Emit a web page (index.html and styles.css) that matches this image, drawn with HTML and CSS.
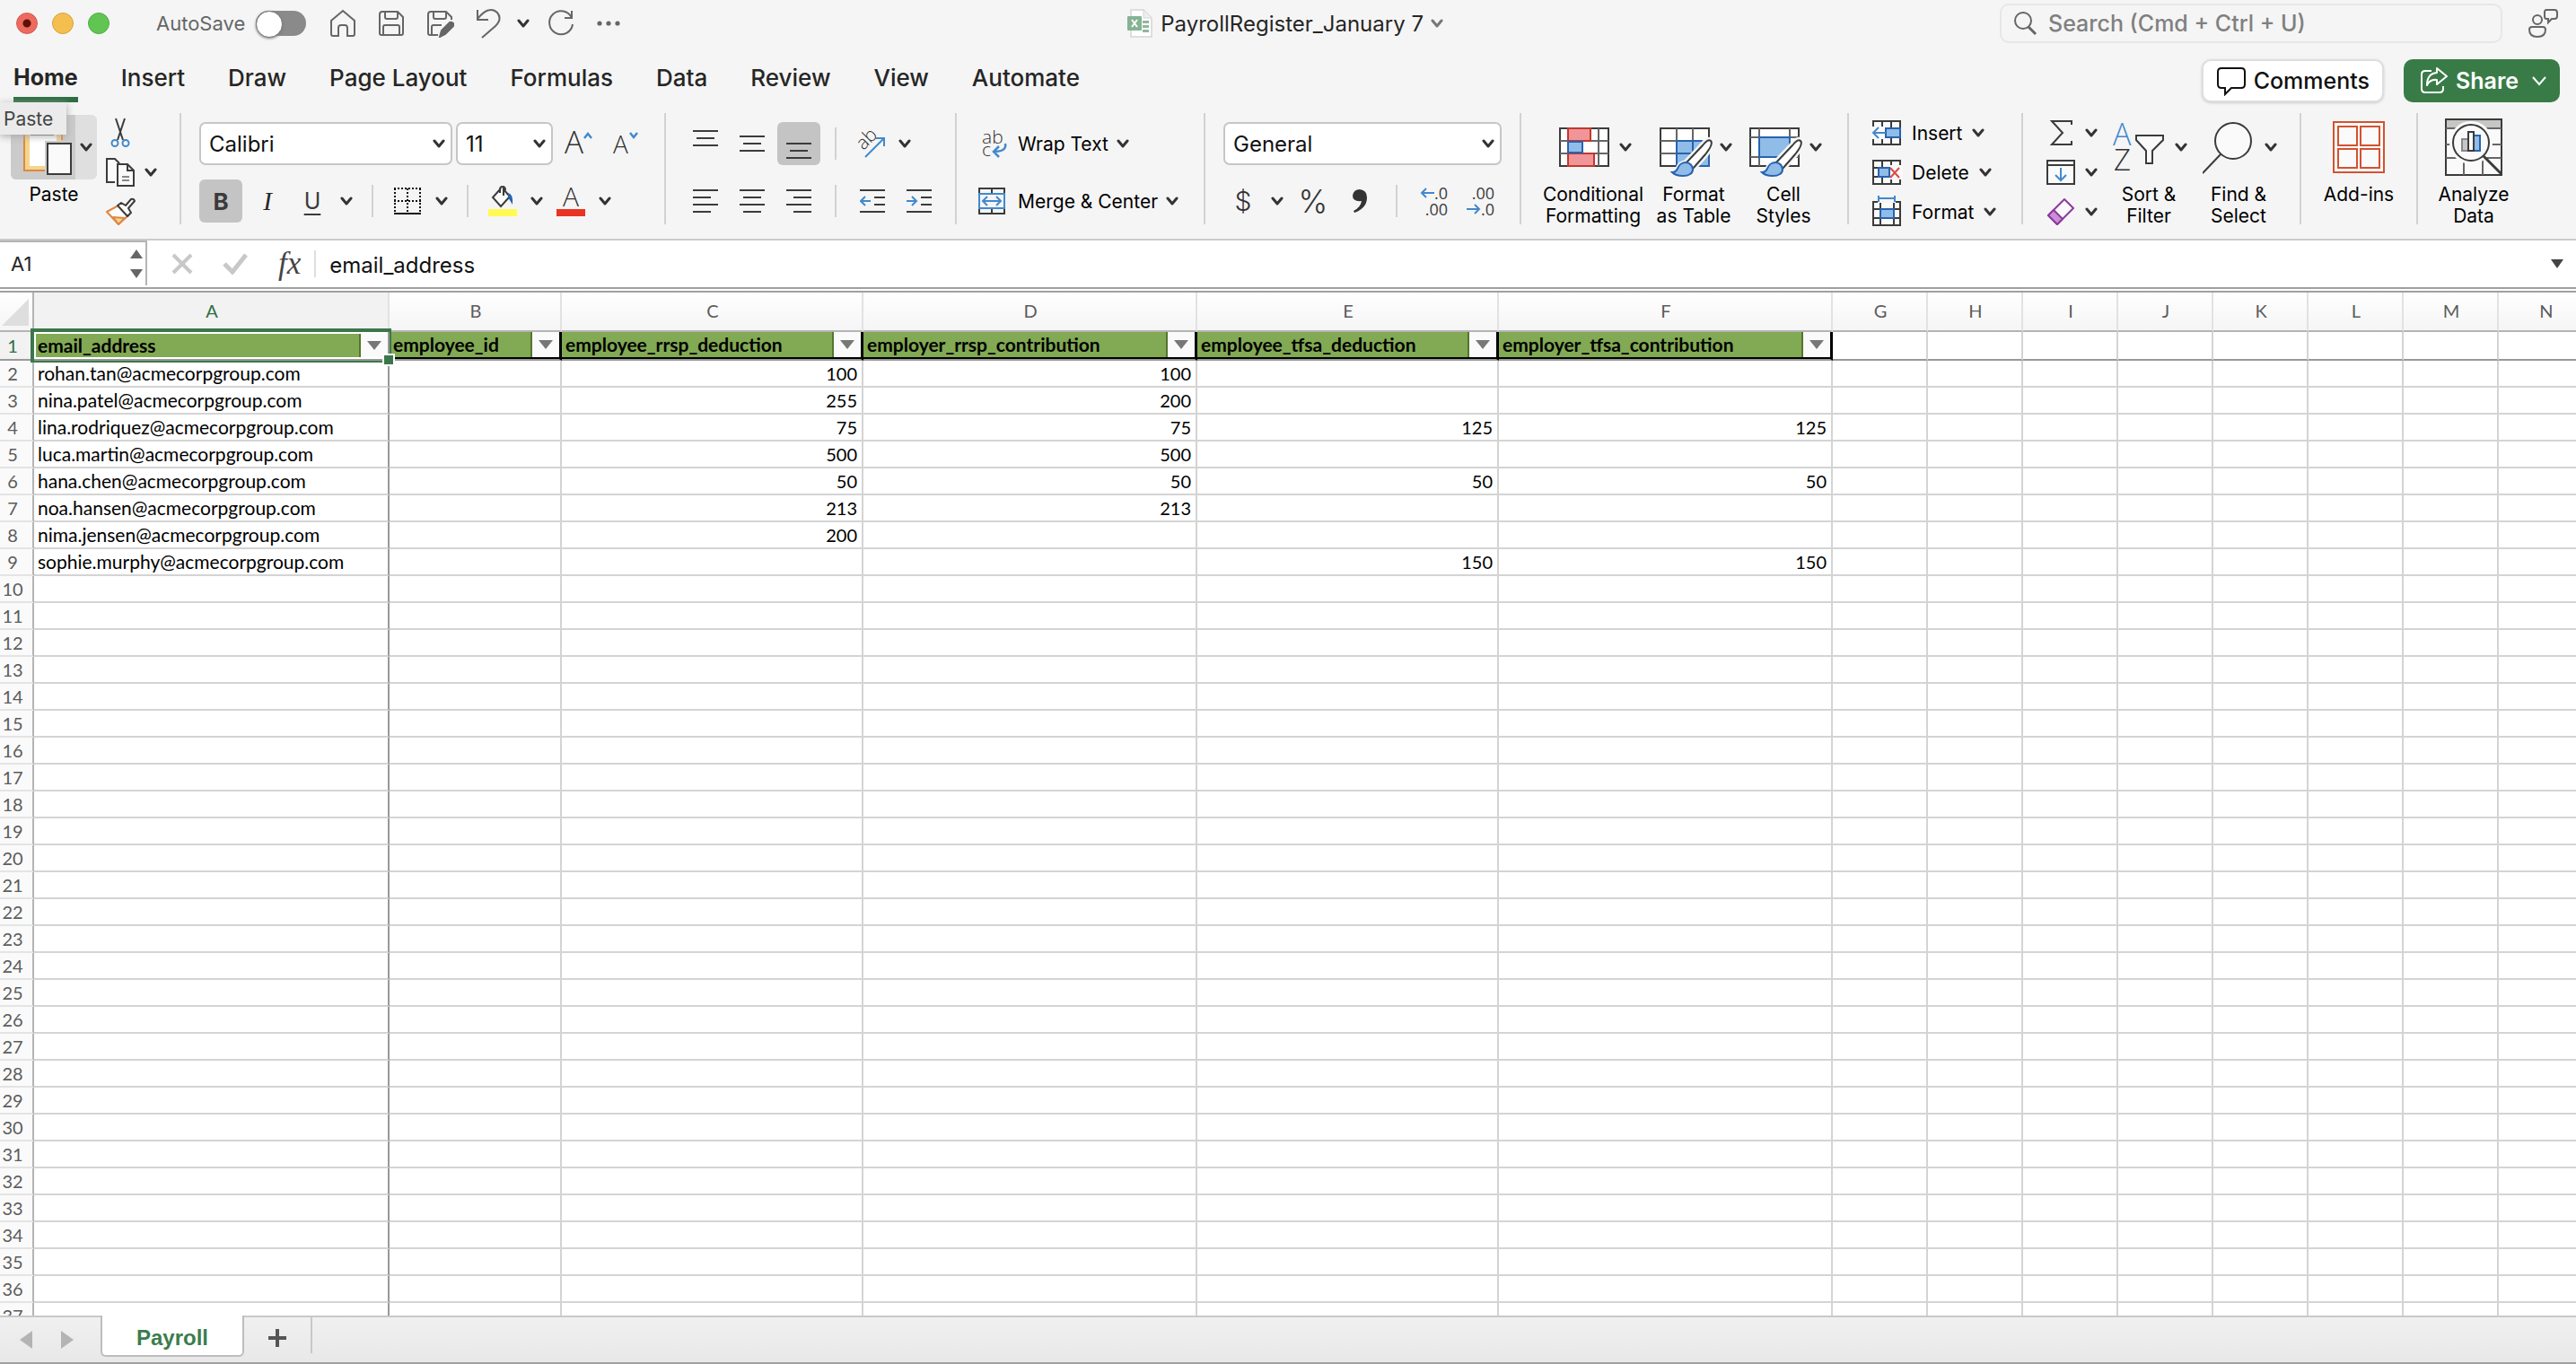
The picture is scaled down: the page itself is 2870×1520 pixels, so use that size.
FILE: index.html
```html
<!DOCTYPE html>
<html lang="en">
<head>
<meta charset="utf-8">
<title>PayrollRegister_January 7</title>
<link rel="stylesheet" href="styles.css">
</head>
<body>
<svg class="defs" aria-hidden="true">
  <symbol id="chev" viewBox="0 0 14 10"><path d="M2 2l5 6 5-6" fill="none" stroke="currentColor" stroke-width="3" stroke-linecap="round" stroke-linejoin="round"/></symbol>
  <symbol id="brush" viewBox="0 0 64 66"><path d="M59 25c3 3-2 10-6 15L39 56l-7-7L50 30c4-5 7-7 9-5z" fill="#f5f5f5" stroke="#f5f5f5" stroke-width="7"/><path d="M31 49c5 0 8 4 8 8 0 4-4 7-11 7-6 0-9-1-12-4 4 0 5-2 6-4 1-3 4-7 9-7z" fill="#f5f5f5" stroke="#f5f5f5" stroke-width="5"/><path d="M59 25c3 3-2 10-6 15L39 56l-7-7L50 30c4-5 7-7 9-5z" fill="#fff" stroke="#3b3b3b" stroke-width="2"/><path d="M31 49c5 0 8 4 8 8 0 4-4 7-11 7-6 0-9-1-12-4 4 0 5-2 6-4 1-3 4-7 9-7z" fill="#90bce8" stroke="#2763b0" stroke-width="2"/></symbol>
</svg>

<header class="titlebar">
  <div class="lights">
    <button class="light red" aria-label="Close"></button>
    <button class="light yellow" aria-label="Minimize"></button>
    <button class="light green" aria-label="Zoom"></button>
  </div>
  <label class="autosave">AutoSave<input type="checkbox" role="switch"></label>
  <div class="quick">
    <button aria-label="Home"><svg width="32" height="32" viewBox="0 0 32 32"><path d="M3 13L16 2l13 11v15q0 2-2 2h-6v-9q0-3-3-3h-4q-3 0-3 3v9H5q-2 0-2-2z"/></svg></button>
    <button aria-label="Save"><svg width="32" height="32" viewBox="0 0 32 32"><path d="M6 3h17l6 6v18q0 2-2 2H5q-2 0-2-2V6q0-3 3-3zM9 3v6q0 2 2 2h10q2 0 2-2V3M7 29V20q0-2 2-2h14q2 0 2 2v9"/></svg></button>
    <button aria-label="Save as"><svg width="32" height="32" viewBox="0 0 32 32"><path d="M14 29H5q-2 0-2-2V6q0-3 3-3h17l6 6v3M9 3v6q0 2 2 2h10q2 0 2-2V3M7 29V20q0-2 2-2h9"/><path d="M16 31l2-7 9-9q2-1 4 1 1 2 0 3l-9 9z" fill="#666"/></svg></button>
    <button aria-label="Undo"><svg width="32" height="36" viewBox="0 0 32 36"><path d="M4 3v11h12M4 13C12 3 20 0 26 6c5 6 1 12-2 15L9 34"/></svg></button>
    <button class="narrow" aria-label="Undo history"><svg class="chev"><use href="#chev"/></svg></button>
    <button aria-label="Redo"><svg width="32" height="32" viewBox="0 0 32 32"><path d="M28 10A13 13 0 1 0 29 17M28 2v8H20"/></svg></button>
    <button aria-label="More"><svg width="32" height="32" viewBox="0 0 32 32"><g fill="#666" stroke="none"><circle cx="5" cy="16" r="2.600"/><circle cx="15" cy="16" r="2.600"/><circle cx="25" cy="16" r="2.600"/></g></svg></button>
  </div>
  <button class="doc">
    <svg width="30" height="34" viewBox="0 0 30 34"><path d="M5 2h14l9 9v21H5z" fill="#fff" stroke="#d5d5d5" stroke-width="1.500"/><path d="M19 2v9h9" fill="#eee" stroke="#d5d5d5"/><path d="M18 14h7v3h-7zM18 19h7v3h-7zM18 24h7v3h-7z" fill="#8fb79b"/><rect x="1" y="9" width="16" height="16" rx="1" fill="#85b394"/><path d="M6 13l6 8M12 13l-6 8" stroke="#fff" stroke-width="2"/></svg>
    <span>PayrollRegister_January 7</span>
    <svg class="chev light-chev"><use href="#chev"/></svg>
  </button>
  <div class="title-right">
    <div class="search">
      <svg width="28" height="28" viewBox="0 0 28 28" fill="none" stroke="#666" stroke-width="2"><circle cx="12" cy="11" r="9"/><path d="M18 18l8 8" stroke-width="3"/></svg>
      <input type="search" aria-label="Search" placeholder="Search (Cmd + Ctrl + U)">
    </div>
    <button class="person" aria-label="Presence"><svg width="34" height="34" viewBox="0 0 34 34" fill="none" stroke="#666" stroke-width="2"><circle cx="11" cy="13" r="5"/><path d="M5 21h12q3 0 3 3 0 8-9 8t-9-8q0-3 3-3zM21 2h9q3 0 3 3v4q0 3-3 3h-3l-4 4v-4h-2q-2 0-2-3V5q0-3 2-3z"/></svg></button>
  </div>
</header>

<div class="tabrow">
  <nav class="tabs">
    <a class="active" href="#home">Home</a><a href="#insert">Insert</a><a href="#draw">Draw</a><a href="#layout">Page Layout</a><a href="#formulas">Formulas</a><a href="#data">Data</a><a href="#review">Review</a><a href="#view">View</a><a href="#automate">Automate</a>
  </nav>
  <div class="actions">
    <button class="comments"><svg width="34" height="34" viewBox="0 0 34 34" fill="none" stroke="#111" stroke-width="2"><path d="M6 3h22q4 0 4 4v14q0 4-4 4H17l-7 7v-7H6q-4 0-4-4V7q0-4 4-4z"/></svg>Comments</button>
    <button class="share"><svg width="32" height="32" viewBox="0 0 32 32" fill="none" stroke="#fff" stroke-width="2"><path d="M13 5H6Q2 5 2 9v16q0 4 4 4h16q4 0 4-4v-3M19 2l11 9-11 9v-5q-8-1-11 6 0-13 11-14z" stroke-linejoin="round"/></svg>Share<svg class="share-chev" width="18" height="12" viewBox="0 0 18 12" fill="none" stroke="#fff" stroke-width="2"><path d="M2 2l7 8 7-8"/></svg></button>
  </div>
</div>

<div class="ribbon">
  <section class="group clipboard" aria-label="Clipboard">
    <div class="big paste">
      <div class="paste-face">
        <button class="paste-main" aria-label="Paste clipboard"><svg width="60" height="64" viewBox="0 0 60 64"><path d="M4 8h40v46H4z" fill="#fff"/><path d="M6 6h36v50H6z" fill="none" stroke="#f5d58c" stroke-width="6"/><path d="M3 6v52h25M45 6v18" fill="none" stroke="#dd8844" stroke-width="2"/><path d="M10 18h26" stroke="#555" stroke-width="2"/><path d="M26 25h32v39H26z" fill="#ccc"/><path d="M29 28h26v34H29z" fill="#fafafa" stroke="#3b3b3b" stroke-width="2"/></svg></button>
        <button class="paste-more" aria-label="Paste options"><svg class="chev"><use href="#chev"/></svg></button>
      </div>
      <span>Paste</span>
      <div class="tooltip" role="tooltip">Paste</div>
    </div>
    <div class="stack">
      <div class="srow"><button class="ic" aria-label="Cut"><svg width="24" height="34" viewBox="0 0 24 34" fill="none"><path d="M7 1l8 24M17 1L9 25" stroke="#3b3b3b" stroke-width="2"/><circle cx="6" cy="28.500" r="3.500" stroke="#4189cc" stroke-width="2"/><circle cx="18" cy="28.500" r="3.500" stroke="#4189cc" stroke-width="2"/></svg></button></div>
      <div class="srow"><button class="ic" aria-label="Copy"><svg width="34" height="34" viewBox="0 0 34 34" fill="#fafafa" stroke="#3b3b3b" stroke-width="2"><path d="M11 28H2V2h9l5 5"/><path d="M14 8h11l7 7v17H14zM25 8v7h7"/><path d="M19 22h8M19 26h8" stroke="#888"/></svg></button><button class="dd" aria-label="Copy options"><svg class="chev"><use href="#chev"/></svg></button></div>
      <div class="srow"><button class="ic" aria-label="Format painter"><svg width="34" height="32" viewBox="0 0 34 32" fill="none" stroke-width="2" stroke-linejoin="round"><path d="M2 16l13-7 11 11-11 10z" fill="#fff" stroke="#dd8844"/><path d="M9 22l13 1-7 7z" fill="#f7d58e" stroke="#dd8844"/><path d="M14 9l4-3 5 3 6-7q3-1 4 2l-7 8 3 5-4 4z" fill="#fafafa" stroke="#3b3b3b"/></svg></button></div>
    </div>
  </section>

  <section class="group font" aria-label="Font">
    <div class="rows">
      <div class="row">
        <div class="pick w-font"><select aria-label="Font name"><option>Calibri</option></select><svg class="chev"><use href="#chev"/></svg></div>
        <div class="pick w-size"><select aria-label="Font size"><option>11</option></select><svg class="chev"><use href="#chev"/></svg></div>
        <button class="sq" aria-label="Increase font size"><svg class="glyph" width="36" height="32" viewBox="0 0 36 32"><text x="3" y="27" font-size="35">A</text><path d="M25 10l4-5 4 5" fill="none" stroke="#4189cc" stroke-width="2.500"/></svg></button>
        <button class="sq" aria-label="Decrease font size"><svg class="glyph" width="36" height="32" viewBox="0 0 36 32"><text x="5" y="27" font-size="28">A</text><path d="M24 4l4 5 4-5" fill="none" stroke="#4189cc" stroke-width="2.500"/></svg></button>
      </div>
      <div class="row">
        <button class="sq on bold" aria-label="Bold">B</button>
        <button class="sq ital" aria-label="Italic">I</button>
        <button class="ic under" aria-label="Underline">U</button><button class="dd" aria-label="Underline style"><svg class="chev"><use href="#chev"/></svg></button>
        <i class="sep"></i>
        <button class="ic" aria-label="Borders"><svg width="32" height="32" viewBox="0 0 32 32" fill="none" stroke="#111" stroke-width="2"><path d="M1 2h30M1 16h30M2 2v26M16 2v26M30 2v26" stroke-dasharray="2 2"/><path d="M1 30h30"/></svg></button><button class="dd" aria-label="Border style"><svg class="chev"><use href="#chev"/></svg></button>
        <i class="sep"></i>
        <button class="ic" aria-label="Fill color"><svg width="32" height="34" viewBox="0 0 32 34" fill="none" stroke-width="2"><path d="M14 3L5 13l9 10 10-11-7-8v7M13 8V4q0-3 3-3t3 4" stroke="#3b3b3b" fill="#fafafa"/><path d="M22 8q6 1 5 13-3-5-5-8z" fill="#2763b0"/><path d="M0 26h32v8H0z" fill="#fffb54"/></svg></button><button class="dd" aria-label="Fill palette"><svg class="chev"><use href="#chev"/></svg></button>
        <button class="ic" aria-label="Font color"><svg class="glyph" width="32" height="34" viewBox="0 0 32 34"><text x="7" y="23" font-size="30">A</text><path d="M0 26h32v8H0z" fill="#e93323"/></svg></button><button class="dd" aria-label="Font palette"><svg class="chev"><use href="#chev"/></svg></button>
      </div>
    </div>
  </section>

  <section class="group" aria-label="Alignment">
    <div class="rows">
      <div class="row">
        <button class="sq" aria-label="Top align"><svg class="al" viewBox="0 0 28 34"><path d="M0 3h28M4 11h20M0 19h28"/></svg></button>
        <button class="sq" aria-label="Middle align"><svg class="al" viewBox="0 0 28 34"><path d="M0 9h28M4 17h20M0 25h28"/></svg></button>
        <button class="sq on" aria-label="Bottom align"><svg class="al" viewBox="0 0 28 34"><path d="M0 17h28M4 25h20M0 33h28"/></svg></button>
        <i class="sep"></i>
        <button class="ic" aria-label="Orientation"><svg class="glyph" width="36" height="34" viewBox="0 0 36 34"><text x="10" y="25" font-size="21" transform="rotate(-45 10 25)">ab</text><path d="M12 32L33 11M24 11h9v9" fill="none" stroke="#4189cc" stroke-width="2"/></svg></button><button class="dd" aria-label="Orientation options"><svg class="chev"><use href="#chev"/></svg></button>
      </div>
      <div class="row">
        <button class="sq" aria-label="Align left"><svg class="al" viewBox="0 0 28 34"><path d="M0 5h28M0 13h20M0 21h28M0 29h20"/></svg></button>
        <button class="sq" aria-label="Center"><svg class="al" viewBox="0 0 28 34"><path d="M0 5h28M4 13h20M0 21h28M4 29h20"/></svg></button>
        <button class="sq" aria-label="Align right"><svg class="al" viewBox="0 0 28 34"><path d="M0 5h28M8 13h20M0 21h28M8 29h20"/></svg></button>
        <i class="sep"></i>
        <button class="sq" aria-label="Decrease indent"><svg class="al" viewBox="0 0 28 34"><path d="M0 5h28M16 13h12M16 21h12M0 29h28"/><path class="bl" d="M12 17H1M6 12l-5 5 5 5"/></svg></button>
        <button class="sq" aria-label="Increase indent"><svg class="al" viewBox="0 0 28 34"><path d="M0 5h28M16 13h12M16 21h12M0 29h28"/><path class="bl" d="M0 17h11M6 12l5 5-5 5"/></svg></button>
      </div>
    </div>
  </section>

  <section class="group wrap" aria-label="Cell text">
    <div class="rows">
      <div class="row">
        <button class="lab"><svg class="glyph" width="40" height="36" viewBox="0 0 40 36"><text x="8" y="18" font-size="21">ab</text><text x="8" y="32" font-size="21">c</text><path d="M34 18q2 9-13 9M27 21l-6 6 6 6" fill="none" stroke="#4189cc" stroke-width="2.500"/></svg>Wrap Text</button><button class="dd" aria-label="Wrap options"><svg class="chev"><use href="#chev"/></svg></button>
      </div>
      <div class="row">
        <button class="lab"><svg width="40" height="32" viewBox="0 0 40 32" fill="none" stroke-width="2"><path d="M5 2h28v28H5zM19 2v6M19 24v6" stroke="#3b3b3b"/><path d="M5 8h28v16H5zM10 16h18M14 11l-5 5 5 5M24 11l5 5-5 5" stroke="#4189cc" fill="none"/></svg>Merge &amp; Center</button><button class="dd" aria-label="Merge options"><svg class="chev"><use href="#chev"/></svg></button>
      </div>
    </div>
  </section>

  <section class="group font" aria-label="Number">
    <div class="rows">
      <div class="row"><div class="pick w-num"><select aria-label="Number format"><option>General</option></select><svg class="chev"><use href="#chev"/></svg></div></div>
      <div class="row">
        <button class="ic sym" aria-label="Currency">$</button><button class="dd" aria-label="Currency options"><svg class="chev"><use href="#chev"/></svg></button>
        <button class="sq sym pct" aria-label="Percent">%</button>
        <button class="sq" aria-label="Comma style"><svg width="16" height="26" viewBox="0 0 16 26"><path d="M8 0q8 1 8 9 0 12-14 17l-1-2Q9 20 10 13q-10 1-10-6 1-7 8-7z" fill="#333"/></svg></button>
        <i class="sep"></i>
        <button class="sq dec" aria-label="Increase decimal"><span><svg width="16" height="12" viewBox="0 0 16 12"><path d="M7 1L2 6l5 5M2 6h14"/></svg>.0</span><span>.00</span></button>
        <button class="sq dec" aria-label="Decrease decimal"><span>.00</span><span><svg width="16" height="12" viewBox="0 0 16 12"><path d="M9 1l5 5-5 5M14 6H0"/></svg>.0</span></button>
      </div>
    </div>
  </section>

  <section class="group styles" aria-label="Styles">
    <button class="big wide"><span class="face"><svg width="60" height="64" viewBox="0 0 60 64" fill="#fff" stroke-width="2"><path d="M3 11h54v42H3z" stroke="#3b3b3b"/><path d="M3 25h54M3 39h54M46 11v42" stroke="#666"/><path d="M12 11h25v14H12zM12 39h29v14H12z" fill="#f19599" stroke="#c0392b"/><path d="M12 26h16v12H12z" fill="#90bce8" stroke="#2763b0"/></svg><svg class="chev"><use href="#chev"/></svg></span>Conditional<br>Formatting</button>
    <button class="big"><span class="face"><svg class="over" width="60" height="64" viewBox="0 0 60 64" fill="#fff" stroke-width="2"><path d="M3 11h54v42H3z" stroke="#3b3b3b"/><path d="M3 25h54M3 39h54M21 11v42M39 11v42" stroke="#666"/><path d="M21 25h36v28H21z" fill="#90bce8"/><path d="M21 53V25h36M21 39h36M39 25v28M21 53h36V25" fill="none" stroke="#2763b0"/><use href="#brush" width="64" height="66"/></svg><svg class="chev"><use href="#chev"/></svg></span>Format<br>as Table</button>
    <button class="big"><span class="face"><svg class="over" width="60" height="64" viewBox="0 0 60 64" fill="#fff" stroke-width="2"><path d="M3 11h54v42H3z" stroke="#3b3b3b"/><path d="M3 21h54M3 43h54M13 11v42M47 11v42" stroke="#666"/><path d="M13 21h34v22H13z" fill="#90bce8" stroke="#2763b0"/><use href="#brush" width="64" height="66"/></svg><svg class="chev"><use href="#chev"/></svg></span>Cell<br>Styles</button>
  </section>

  <section class="group cells" aria-label="Cells">
    <div class="stack">
      <div class="srow"><button class="lab small"><svg width="44" height="32" viewBox="0 0 44 32" fill="#fafafa" stroke="#3b3b3b" stroke-width="2"><path d="M7 3h30v26H7zM17 3v26M27 3v26"/><path d="M21 11h16v10H21z" fill="#90bce8" stroke="#2763b0"/><path d="M5 9h13v14H5z" stroke="none"/><path d="M21 16H7M13 10l-6 6 6 6" fill="none" stroke="#4189cc"/></svg>Insert</button><button class="dd" aria-label="Insert options"><svg class="chev"><use href="#chev"/></svg></button></div>
      <div class="srow"><button class="lab small"><svg width="44" height="32" viewBox="0 0 44 32" fill="#fafafa" stroke="#3b3b3b" stroke-width="2"><path d="M7 3h30v26H7zM17 3v26M27 3v26M7 11h30M7 21h30"/><path d="M13 11h12v10H13z" fill="#90bce8" stroke="#2763b0"/><path d="M26 8h14v16H26z" stroke="none"/><path d="M26 11l10 11M36 11L26 22" stroke="#dc4a44"/></svg>Delete</button><button class="dd" aria-label="Delete options"><svg class="chev"><use href="#chev"/></svg></button></div>
      <div class="srow"><button class="lab small"><svg width="44" height="36" viewBox="0 0 44 36" fill="#fafafa" stroke="#3b3b3b" stroke-width="2"><path d="M7 7h30v26H7zM15 7v26M30 7v26M7 15h30M7 25h30"/><path d="M15 15h15v10H15z" fill="#90bce8" stroke="#2763b0"/><path d="M12 0h20v8H12z" fill="#f5f5f5" stroke="none"/><path d="M13 3h18M13 0v7M31 0v7" stroke="#4189cc"/></svg>Format</button><button class="dd" aria-label="Format options"><svg class="chev"><use href="#chev"/></svg></button></div>
    </div>
  </section>

  <section class="group editing" aria-label="Editing">
    <div class="stack">
      <div class="srow"><button class="ic" aria-label="AutoSum"><svg width="32" height="32" viewBox="0 0 32 32" fill="none" stroke="#3b3b3b" stroke-width="2"><path d="M28 7V3H6l12 13L6 29h22v-4"/></svg></button><button class="dd" aria-label="AutoSum options"><svg class="chev"><use href="#chev"/></svg></button></div>
      <div class="srow"><button class="ic" aria-label="Fill"><svg width="32" height="32" viewBox="0 0 32 32" fill="#fafafa" stroke="#3b3b3b" stroke-width="2"><path d="M1 3h30v26H1zM1 8h30"/><path d="M16 11v14M10 19l6 6 6-6" fill="none" stroke="#4189cc"/></svg></button><button class="dd" aria-label="Fill options"><svg class="chev"><use href="#chev"/></svg></button></div>
      <div class="srow"><button class="ic" aria-label="Clear"><svg width="32" height="32" viewBox="0 0 32 32" fill="#fafafa" stroke="#8d3a9e" stroke-width="2" stroke-linejoin="round"><path d="M20 2l10 10-18 18L2 20z"/><path d="M8 14l10 10-6 6L2 20z" fill="#c98fd6"/></svg></button><button class="dd" aria-label="Clear options"><svg class="chev"><use href="#chev"/></svg></button></div>
    </div>
    <button class="big"><span class="face"><svg class="glyph over" width="60" height="64" viewBox="0 0 60 64"><text class="blue" x="0" y="30" font-size="34">A</text><text x="1" y="58" font-size="33">Z</text><path d="M26 19h30v5L44 36v14h-7V36L26 24z" fill="#fafafa" stroke="#3b3b3b" stroke-width="2"/></svg><svg class="chev"><use href="#chev"/></svg></span>Sort &amp;<br>Filter</button>
    <button class="big"><span class="face"><svg width="60" height="64" viewBox="0 0 60 64" fill="#fafafa" stroke="#3b3b3b" stroke-width="2"><circle cx="34" cy="25" r="20"/><path d="M20 40L0 61"/></svg><svg class="chev"><use href="#chev"/></svg></span>Find &amp;<br>Select</button>
  </section>

  <section class="group addins" aria-label="Add-ins">
    <button class="big"><span class="face solo"><svg width="60" height="64" viewBox="0 0 60 64" fill="#fafafa" stroke="#d35230" stroke-width="2"><path d="M2 4h56v56H2z"/><path d="M7 9h21v21H7zM32 9h21v21H32zM7 34h21v21H7zM32 34h21v21H32z"/></svg></span>Add-ins</button>
  </section>
  <section class="group last" aria-label="Analysis">
    <button class="big"><span class="face solo"><svg width="66" height="68" viewBox="0 0 66 68" fill="#fafafa" stroke="#3b3b3b" stroke-width="2"><path d="M2 3h62v62H2z"/><path d="M3 4h60v9H3z" fill="#c8c6c4" stroke="none"/><path d="M2 13h62M2 31h62M2 46h62M22 48v17M43 48v17" stroke="#666"/><circle cx="30" cy="29" r="23" stroke="#fafafa"/><circle cx="30" cy="29" r="20"/><path d="M20 25h7v13h-7z" fill="#c8c6c4" stroke="#888"/><path d="M33 21h7v17h-7z" fill="#90bce8" stroke="#2763b0"/><path d="M27 17h6v21h-6z"/><path d="M44 44l20 20" stroke-width="3"/></svg></span>Analyze<br>Data</button>
  </section>
</div>

<div class="formulabar">
  <div class="namebox"><input aria-label="Name box" value="A1"><span class="spin"><svg width="14" height="10" viewBox="0 0 14 10"><path d="M0 10L7 0l7 10z"/></svg><svg width="14" height="10" viewBox="0 0 14 10"><path d="M0 0l7 10 7-10z"/></svg></span></div>
  <button aria-label="Cancel"><svg width="24" height="24" viewBox="0 0 24 24" stroke="#c8c8c8" stroke-width="4"><path d="M2 2l20 20M22 2L2 22"/></svg></button>
  <button aria-label="Enter"><svg width="28" height="24" viewBox="0 0 28 24" fill="none" stroke="#c8c8c8" stroke-width="5"><path d="M2 12l9 9L26 2"/></svg></button>
  <button class="fx" aria-label="Insert function">fx</button>
  <input class="formula" aria-label="Formula" value="email_address">
  <button aria-label="Expand formula bar"><svg width="14" height="10" viewBox="0 0 14 10"><path d="M0 0l7 10 7-10z" fill="#444"/></svg></button>
</div>

<main class="sheet">
<div class="selection"></div><div class="handle"></div>
<table>
<colgroup><col class="c-row"><col class="c-a"><col class="c-b"><col class="c-m"><col class="c-l"><col class="c-m"><col class="c-l"><col span="8" class="c-s"></colgroup>
<thead><tr><th class="corner"><svg width="30" height="30" viewBox="0 0 30 30"><path d="M30 0v30H0z" fill="#dedede"/></svg></th><th class="sel">A</th><th>B</th><th>C</th><th>D</th><th>E</th><th>F</th><th>G</th><th>H</th><th>I</th><th>J</th><th>K</th><th>L</th><th>M</th><th>N</th></tr></thead>
<tbody>
<tr class="head"><th class="sel">1</th>
<td class="key first"><div class="kc"><span>email_address</span><button aria-label="Filter email_address"><svg width="16" height="10" viewBox="0 0 16 10"><path d="M0 0h16L8 10z"/></svg></button></div></td>
<td class="key"><div class="kc"><span>employee_id</span><button aria-label="Filter employee_id"><svg width="16" height="10" viewBox="0 0 16 10"><path d="M0 0h16L8 10z"/></svg></button></div></td>
<td class="key"><div class="kc"><span>employee_rrsp_deduction</span><button aria-label="Filter employee_rrsp_deduction"><svg width="16" height="10" viewBox="0 0 16 10"><path d="M0 0h16L8 10z"/></svg></button></div></td>
<td class="key"><div class="kc"><span>employer_rrsp_contribution</span><button aria-label="Filter employer_rrsp_contribution"><svg width="16" height="10" viewBox="0 0 16 10"><path d="M0 0h16L8 10z"/></svg></button></div></td>
<td class="key"><div class="kc"><span>employee_tfsa_deduction</span><button aria-label="Filter employee_tfsa_deduction"><svg width="16" height="10" viewBox="0 0 16 10"><path d="M0 0h16L8 10z"/></svg></button></div></td>
<td class="key"><div class="kc"><span>employer_tfsa_contribution</span><button aria-label="Filter employer_tfsa_contribution"><svg width="16" height="10" viewBox="0 0 16 10"><path d="M0 0h16L8 10z"/></svg></button></div></td>
<td><td><td><td><td><td><td><td></tr>
<tr><th>2<td>rohan.tan@acmecorpgroup.com<td><td>100<td>100<td><td><td><td><td><td><td><td><td><td>
<tr><th>3<td>nina.patel@acmecorpgroup.com<td><td>255<td>200<td><td><td><td><td><td><td><td><td><td><td>
<tr><th>4<td>lina.rodriquez@acmecorpgroup.com<td><td>75<td>75<td>125<td>125<td><td><td><td><td><td><td><td><td>
<tr><th>5<td>luca.martin@acmecorpgroup.com<td><td>500<td>500<td><td><td><td><td><td><td><td><td><td><td>
<tr><th>6<td>hana.chen@acmecorpgroup.com<td><td>50<td>50<td>50<td>50<td><td><td><td><td><td><td><td><td>
<tr><th>7<td>noa.hansen@acmecorpgroup.com<td><td>213<td>213<td><td><td><td><td><td><td><td><td><td><td>
<tr><th>8<td>nima.jensen@acmecorpgroup.com<td><td>200<td><td><td><td><td><td><td><td><td><td><td><td>
<tr><th>9<td>sophie.murphy@acmecorpgroup.com<td><td><td><td>150<td>150<td><td><td><td><td><td><td><td><td>
<tr><th>10<td><td><td><td><td><td><td><td><td><td><td><td><td><td>
<tr><th>11<td><td><td><td><td><td><td><td><td><td><td><td><td><td>
<tr><th>12<td><td><td><td><td><td><td><td><td><td><td><td><td><td>
<tr><th>13<td><td><td><td><td><td><td><td><td><td><td><td><td><td>
<tr><th>14<td><td><td><td><td><td><td><td><td><td><td><td><td><td>
<tr><th>15<td><td><td><td><td><td><td><td><td><td><td><td><td><td>
<tr><th>16<td><td><td><td><td><td><td><td><td><td><td><td><td><td>
<tr><th>17<td><td><td><td><td><td><td><td><td><td><td><td><td><td>
<tr><th>18<td><td><td><td><td><td><td><td><td><td><td><td><td><td>
<tr><th>19<td><td><td><td><td><td><td><td><td><td><td><td><td><td>
<tr><th>20<td><td><td><td><td><td><td><td><td><td><td><td><td><td>
<tr><th>21<td><td><td><td><td><td><td><td><td><td><td><td><td><td>
<tr><th>22<td><td><td><td><td><td><td><td><td><td><td><td><td><td>
<tr><th>23<td><td><td><td><td><td><td><td><td><td><td><td><td><td>
<tr><th>24<td><td><td><td><td><td><td><td><td><td><td><td><td><td>
<tr><th>25<td><td><td><td><td><td><td><td><td><td><td><td><td><td>
<tr><th>26<td><td><td><td><td><td><td><td><td><td><td><td><td><td>
<tr><th>27<td><td><td><td><td><td><td><td><td><td><td><td><td><td>
<tr><th>28<td><td><td><td><td><td><td><td><td><td><td><td><td><td>
<tr><th>29<td><td><td><td><td><td><td><td><td><td><td><td><td><td>
<tr><th>30<td><td><td><td><td><td><td><td><td><td><td><td><td><td>
<tr><th>31<td><td><td><td><td><td><td><td><td><td><td><td><td><td>
<tr><th>32<td><td><td><td><td><td><td><td><td><td><td><td><td><td>
<tr><th>33<td><td><td><td><td><td><td><td><td><td><td><td><td><td>
<tr><th>34<td><td><td><td><td><td><td><td><td><td><td><td><td><td>
<tr><th>35<td><td><td><td><td><td><td><td><td><td><td><td><td><td>
<tr><th>36<td><td><td><td><td><td><td><td><td><td><td><td><td><td>
<tr><th>37<td><td><td><td><td><td><td><td><td><td><td><td><td><td>
</tbody>
</table>
</main>

<footer class="sheettabs">
  <button class="nav" aria-label="Previous sheet"><svg width="14" height="20" viewBox="0 0 14 20"><path d="M14 0v20L0 10z"/></svg></button>
  <button class="nav" aria-label="Next sheet"><svg width="14" height="20" viewBox="0 0 14 20"><path d="M0 0v20l14-10z"/></svg></button>
  <button class="sheettab">Payroll</button>
  <button class="add" aria-label="New sheet"><svg width="20" height="20" viewBox="0 0 20 20"><path d="M10 0v20M0 10h20" stroke="#555" stroke-width="4"/></svg></button>
</footer>
</body>
</html>
```
FILE: styles.css
```css
* { box-sizing: border-box; }

body {
  margin: 0;
  height: 100vh;
  display: flex;
  flex-direction: column;
  overflow: hidden;
  background: #f5f5f5;
  color: #262626;
  font-family: Inter, "Liberation Sans", sans-serif;
  font-size: 20px;
}

button, input, select {
  font: inherit;
  color: inherit;
  border: 0;
  background: none;
  padding: 0;
  margin: 0;
  outline: 0;
}

svg { display: block; flex: none; }
.defs { display: none; }
.chev { width: 14px; height: 10px; color: #333; }
.over { overflow: visible; }
.glyph text { font-family: "Open Sans", sans-serif; font-weight: 300; fill: #333; }
.glyph .blue { fill: #4189cc; }

/* Title bar */
.titlebar { display: flex; align-items: center; height: 52px; padding: 0 20px 0 18px; }
.lights { display: flex; gap: 16px; }
.light { width: 24px; height: 24px; border-radius: 50%; border: 1px solid #d8a13c; background: #f5bf4f; }
.light.red { border-color: #d5574b; background: radial-gradient(circle, #5e0f08 0 4px, #ed6a5e 5px); }
.light.green { border-color: #51ad43; background: #61c554; }
.autosave { display: flex; align-items: center; gap: 12px; margin-left: 52px; font-size: 22px; color: #666; }
.autosave input { appearance: none; width: 56px; height: 28px; border-radius: 14px; background: #8a8a8a; display: flex; }
.autosave input::before { content: ""; width: 28px; height: 28px; border-radius: 50%; background: #fff; border: 1px solid #777; box-shadow: 0 1px 3px #777; }
.quick { display: flex; align-items: center; gap: 22px; margin-left: 25px; }
.quick > button > svg { fill: none; stroke: #666; stroke-width: 2; }
.quick .narrow { margin: 0 -3px 0 -6px; }
.doc { display: flex; align-items: center; gap: 8px; margin-left: auto; margin-right: 620px; font-size: 24px; }
.light-chev { color: #777; }
.title-right { display: flex; align-items: center; gap: 28px; }
.search { display: flex; align-items: center; gap: 12px; width: 560px; height: 44px; padding: 0 12px; border: 2px solid #e7e7e7; border-radius: 10px; }
.search input { flex: 1; font-size: 25px; font-weight: 500; }
.search input::placeholder { color: #808080; opacity: 1; }

/* Tabs */
.tabrow { display: flex; justify-content: space-between; padding: 14px 18px 0 15px; height: 74px; }
.tabs { display: flex; gap: 48px; height: 48px; }
.tabs a { display: flex; align-items: center; height: 48px; padding-bottom: 2px; border-bottom: 6px solid transparent; color: #262626; text-decoration: none; font-size: 26px; font-weight: 500; }
.tabs .active { font-weight: 700; font-size: 25px; border-image: linear-gradient(#2f6e43, #2f6e43) 6; }
.actions { display: flex; gap: 22px; }
.actions button { display: flex; align-items: center; gap: 8px; height: 48px; padding: 0 14px; border-radius: 10px; font-size: 25px; font-weight: 500; }
.comments { background: #fff; border: 2px solid #dedede; color: #111; box-shadow: 0 1px 3px #ccc; }
.actions .share { width: 174px; padding: 0 14px 0 18px; background: #397b47; color: #fff; font-weight: 600; }
.share-chev { margin-left: auto; }

/* Ribbon */
.ribbon { display: flex; height: 142px; border-bottom: 2px solid #cbcbcb; }
.group { display: flex; flex: none; gap: 4px; padding-left: 20px; }
.group::after { content: ""; width: 2px; height: 124px; background: #d2d2d2; margin-left: auto; }
.group.last::after { display: none; }
.rows { display: flex; flex-direction: column; gap: 16px; padding: 10px 12px 0 0; }
.font .rows { padding-right: 16px; }
.row { display: flex; align-items: center; gap: 4px; height: 48px; }
.srow { display: flex; align-items: center; height: 44px; }
.ic, .sq, .dd { display: flex; align-items: center; justify-content: center; height: 44px; }
.ic { width: 44px; }
.sq { width: 48px; height: 48px; border-radius: 6px; }
.dd { width: 24px; }
.on { background: #c4c4c4; }
.sep { width: 2px; height: 36px; margin: 0 12px; background: #d2d2d2; }
.pick { display: grid; align-items: center; height: 48px; }
.pick > * { grid-area: 1 / 1; }
.pick select { appearance: none; width: 100%; height: 48px; padding: 0 9px; background: #fff; border: 2px solid #c6c6c6; border-radius: 7px; font-size: 24px; color: #111; }
.pick .chev { justify-self: end; margin-right: 8px; pointer-events: none; }
.w-font { width: 282px; }
.w-size { width: 108px; }
.w-num { width: 310px; }
.bold { font-size: 26px; font-weight: 700; color: #3b3b3b; }
.ital { font-family: "Liberation Serif", serif; font-style: italic; font-size: 29px; }
.under { font-size: 25px; color: #3b3b3b; text-decoration: underline; text-underline-offset: 5px; text-decoration-thickness: 2px; }
.sym { font-size: 30px; font-weight: 300; color: #333; }
.pct { font-size: 35px; }
.al { width: 28px; height: 34px; fill: none; stroke: #3b3b3b; stroke-width: 2; }
.al .bl { stroke: #4189cc; }
.lab { display: flex; align-items: center; gap: 8px; font-size: 21px; color: #000; white-space: nowrap; }
.lab.small { gap: 6px; }
.cells .dd { margin-left: 6px; }
.dec { flex-direction: column; align-items: flex-end; padding-right: 8px; font-family: "Open Sans", sans-serif; font-size: 18px; line-height: 20px; color: #3b3b3b; }
.dec span { display: flex; align-items: center; height: 18px; }
.dec svg { fill: none; stroke: #4189cc; stroke-width: 2; }
.wrap { width: 277px; }
.styles { width: 365px; }
.cells { width: 194px; gap: 0; }
.editing { width: 310px; }
.addins { width: 130px; }
.clipboard { width: 202px; padding-left: 12px; }
.big { display: flex; flex-direction: column; align-items: center; width: 96px; padding-top: 2px; font-size: 21px; line-height: 24px; color: #000; white-space: nowrap; position: relative; text-align: center; align-self: flex-start; }
.wide { width: 120px; }
.face { display: flex; align-items: center; gap: 4px; height: 72px; width: 96px; padding-left: 8px; margin-bottom: 5px; }
.face .chev { margin: 0 5px; }
.solo { justify-content: center; padding-left: 0; }
.addins .big { width: 88px; }
.last .big { width: 84px; }
.paste-face { display: flex; width: 96px; height: 72px; margin-bottom: 5px; border-radius: 6px; overflow: hidden; background: #dfdfdf; }
.paste-main { display: flex; align-items: center; width: 72px; padding-left: 12px; background: #cbcbcb; }
.paste-more { display: flex; align-items: center; justify-content: center; flex: 1; }
.tooltip { position: absolute; left: -12px; top: -12px; width: 74px; height: 36px; padding-left: 4px; line-height: 38px; text-align: left; background: #ebebeb; color: #444; box-shadow: 0 2px 8px #aaa; }

/* Formula bar */
.formulabar { display: flex; align-items: center; height: 58px; padding-right: 14px; background: #fff; border-bottom: 6px double #a0a0a0; color: #262626; font-size: 22px; }
.formulabar > button { display: flex; align-items: center; justify-content: center; }
.namebox { display: flex; align-items: center; width: 164px; height: 50px; align-self: flex-start; padding: 0 3px 0 12px; border-top: 2px solid #b4b4b4; border-right: 2px solid #b4b4b4; }
.namebox input { flex: 1; min-width: 0; }
.spin { display: flex; flex-direction: column; gap: 12px; fill: #666; }
.formulabar > button:nth-of-type(1) { margin-left: 27px; }
.formulabar > button:nth-of-type(2) { margin-left: 33px; }
.formulabar .fx { margin: 0 15px 0 34px; font-family: "Liberation Serif", serif; font-style: italic; font-size: 35px; line-height: 40px; color: #444; }
.formula { flex: 1; height: 30px; padding: 2px 0 0 15px; border-left: 2px solid #dedede; font-size: 24px; color: #111; }

/* Sheet */
.sheet { flex: 1; min-height: 0; overflow: hidden; position: relative; background: #fff; font-family: Lato, "Open Sans", sans-serif; color: #000; }
table { table-layout: fixed; width: 2890px; border-spacing: 0; }
.c-row { width: 38px; }
.c-a { width: 396px; }
.c-b { width: 192px; }
.c-m { width: 336px; }
.c-l { width: 372px; }
.c-s { width: 106px; }
th { padding: 0; font-weight: 400; color: #5c5c5c; border-right: 2px solid #d4d4d4; }
thead th { height: 44px; padding: 0 0 2px 2px; background: linear-gradient(#fff, #f5f5f5); border-bottom: 2px solid #b4b4b4; border-right-color: #e2e2e2; }
th.sel { color: #2f6e43; background: #f2f2f2; }
th.corner { border-right-color: #b4b4b4; }
.corner svg { margin-top: 4px; }
td, tbody th { height: 30px; line-height: 28px; padding: 0 5px; border-right: 2px solid #d4d4d4; border-bottom: 2px solid #d4d4d4; white-space: nowrap; text-align: right; }
tbody th { padding: 0 8px 0 0; text-align: center; background: #fafafa; border-right-color: #b4b4b4; border-bottom-color: #e4e4e4; }
td:nth-child(2) { padding: 0 4px; font-size: 21px; text-align: left; border-right-color: #999; }
.head td, .head th { height: 32px; border-bottom-color: #999; }
.head .key { padding: 0; text-align: left; border-right: 3px solid #000; }
.kc { display: flex; justify-content: space-between; height: 30px; padding-left: 4px; background: #82a953; border-bottom: 2px solid #000; font-size: 21px; font-weight: 700; }
.kc button { display: flex; align-items: center; justify-content: center; width: 32px; background: #fafafa; border-left: 2px solid #55752f; fill: #777; }
.head .first { border-right: 2px solid #999; }
.first .kc { border: 2px solid #fff; border-right: 0; padding-left: 2px; line-height: 26px; }
.selection { position: absolute; left: 34px; top: 40px; width: 402px; height: 38px; border: 4px solid #3c774b; border-right-width: 2px; border-bottom-width: 2px; }
.handle { position: absolute; left: 428px; top: 70px; width: 10px; height: 10px; background: #3c774b; outline: 2px solid #fff; }

/* Sheet tabs */
.sheettabs { display: flex; align-items: flex-start; height: 54px; background: linear-gradient(#f0f0f0, #e8e8e8); border-top: 2px solid #c8c8c8; border-bottom: 2px solid #a0a0a0; }
.nav { display: flex; align-items: center; height: 50px; padding-left: 22px; fill: #b4b4b4; }
.nav + .nav { padding-left: 32px; }
.sheettab { width: 160px; height: 46px; margin: -2px 0 0 30px; padding-top: 5px; background: #fff; border: 2px solid #bdbdbd; border-top: 0; border-radius: 0 0 6px 6px; color: #3b7d4c; font: 700 24px "Liberation Sans", sans-serif; }
.add { display: flex; align-items: center; justify-content: center; width: 76px; height: 40px; border-right: 2px solid #c8c8c8; }
.add svg { margin-top: 6px; }
```
